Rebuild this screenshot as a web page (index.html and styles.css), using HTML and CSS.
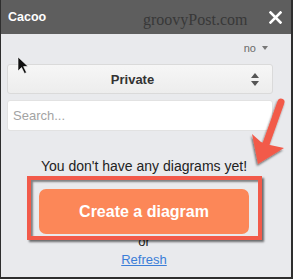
FILE: index.html
```html
<!DOCTYPE html>
<html lang="en">
<head>
    <meta charset="UTF-8">
    <meta name="viewport" content="width=device-width, initial-scale=1.0">
    <title>Cacoo</title>
    <link rel="stylesheet" href="styles.css">
</head>
<body>
<div class="frame">
    <div class="header">
        <span class="title">Cacoo</span>
        <span class="watermark">groovyPost.com</span>
        <svg class="close" width="13" height="13" viewBox="0 0 13 13">
            <path d="M1.5 1.5 L11.5 11.5 M11.5 1.5 L1.5 11.5" stroke="#fff" stroke-width="2.6" stroke-linecap="square"/>
        </svg>
    </div>

    <div class="main">
        <div class="form">
            <div class="lang">no <span class="caret"></span></div>
            <div class="select">
                <span>Private</span>
                <svg class="updown" width="8" height="13" viewBox="0 0 8 13">
                    <path d="M4 0 L8 5 L0 5 Z M0 8 L8 8 L4 13 Z" fill="#555"/>
                </svg>
            </div>
            <input class="search" type="text" placeholder="Search...">
        </div>

        <div class="empty">
            <p class="message">You don't have any diagrams yet!</p>
            <div class="cta">
                <button class="create-btn">Create a diagram</button>
                <div class="highlight"></div>
            </div>
            <p class="or">or</p>
            <a class="refresh" href="#">Refresh</a>
        </div>
    </div>

    <!-- annotation arrow + mouse pointer -->
    <svg class="overlay" width="293" height="279" viewBox="0 0 293 279">
        <defs>
            <filter id="shadow" x="-30%" y="-30%" width="160%" height="160%">
                <feDropShadow dx="-1" dy="2" stdDeviation="1.2" flood-color="#000" flood-opacity="0.55"/>
            </filter>
        </defs>
        <g filter="url(#shadow)" fill="#f25a4a">
            <path d="M280 102 L265 144" stroke="#f25a4a" stroke-width="7" stroke-linecap="round"/>
            <path d="M251 134 L260 142 L269 145 L283 148 L257 164 Z"/>
        </g>
        <path d="M17 57 L17 71 L20.5 67.5 L23.5 73.5 L25.5 72.5 L22.6 66.6 L27 66.4 Z" fill="#111" stroke="#fff" stroke-width="0.6"/>
    </svg>
</div>
</body>
</html>
```

FILE: styles.css
```css
body {
    margin: 0;
    font-family: 'Liberation Sans', Arial, sans-serif;
}

.frame {
    position: relative;
    width: 293px;
    height: 279px;
    box-sizing: border-box;
    border-left: 1px solid #2e2e2e;
    border-right: 2px solid #2e2e2e;
    border-bottom: 2px solid #2e2e2e;
    background: #e9eaed;
    overflow: hidden;
}

.header {
    position: relative;
    height: 34px;
    background: #5e5e5e;
    display: flex;
    align-items: center;
    justify-content: space-between;
    padding: 0 9px 0 7px;
}

.title {
    color: #fff;
    font-weight: bold;
    font-size: 12.5px;
    margin-top: -1px;
}

.watermark {
    position: absolute;
    left: 142px;
    top: 12px;
    font-family: 'Liberation Serif', serif;
    font-size: 16px;
    line-height: 16px;
    color: #383838;
}

.close {
    display: block;
    margin-top: 1px;
}

.form {
    padding: 0 18px 0 6px;
}

.lang {
    margin-top: 8px;
    height: 13px;
    line-height: 13px;
    font-size: 11px;
    color: #6a6a6a;
    text-align: right;
    padding-right: 5px;
}

.caret {
    display: inline-block;
    width: 0;
    height: 0;
    border-left: 3.5px solid transparent;
    border-right: 3.5px solid transparent;
    border-top: 4px solid #777;
    margin-left: 3px;
    vertical-align: 2px;
}

.select {
    margin-top: 9px;
    height: 30px;
    box-sizing: border-box;
    border: 1px solid #dadada;
    border-radius: 3px;
    background: linear-gradient(#f6f6f6, #ededed);
    display: flex;
    align-items: center;
    justify-content: center;
    position: relative;
    padding-right: 15px;
    font-size: 13px;
    font-weight: bold;
    color: #333;
}

.updown {
    position: absolute;
    right: 13px;
    top: 8px;
}

.search {
    display: block;
    margin-top: 6px;
    width: 100%;
    height: 31px;
    box-sizing: border-box;
    border: 1px solid #e2e2e2;
    border-radius: 3px;
    background: #fff;
    padding: 0 5px;
    font-family: 'Liberation Sans', Arial, sans-serif;
    font-size: 13px;
    color: #333;
}

.search::placeholder {
    color: #a3a3a3;
}

.empty {
    padding-right: 4px;
    text-align: center;
}

.message {
    margin: 27px 0 0;
    font-size: 14px;
    line-height: 16px;
    color: #222;
}

.cta {
    position: relative;
    width: 210px;
    margin: 15px auto 0;
}

.create-btn {
    display: block;
    width: 100%;
    height: 45px;
    border: none;
    border-radius: 7px;
    background: #fc8758;
    color: #fff;
    font-family: 'Liberation Sans', Arial, sans-serif;
    font-size: 16px;
    font-weight: bold;
    cursor: pointer;
}

/* red annotation box */
.highlight {
    position: absolute;
    top: -13px;
    left: -12px;
    right: -13px;
    bottom: -6px;
    border: 4px solid #f25a4a;
    box-shadow: 2px 2px 2px rgba(0, 0, 0, 0.55), inset 2px 2px 2px rgba(0, 0, 0, 0.45);
}

.or {
    margin: 0;
    font-size: 13px;
    line-height: 16px;
    color: #222;
}

.refresh {
    display: inline-block;
    margin-top: 2px;
    font-size: 13px;
    line-height: 16px;
    color: #3b7dd8;
    text-decoration: underline;
}

.overlay {
    position: absolute;
    left: 0;
    top: 0;
    pointer-events: none;
}
```
